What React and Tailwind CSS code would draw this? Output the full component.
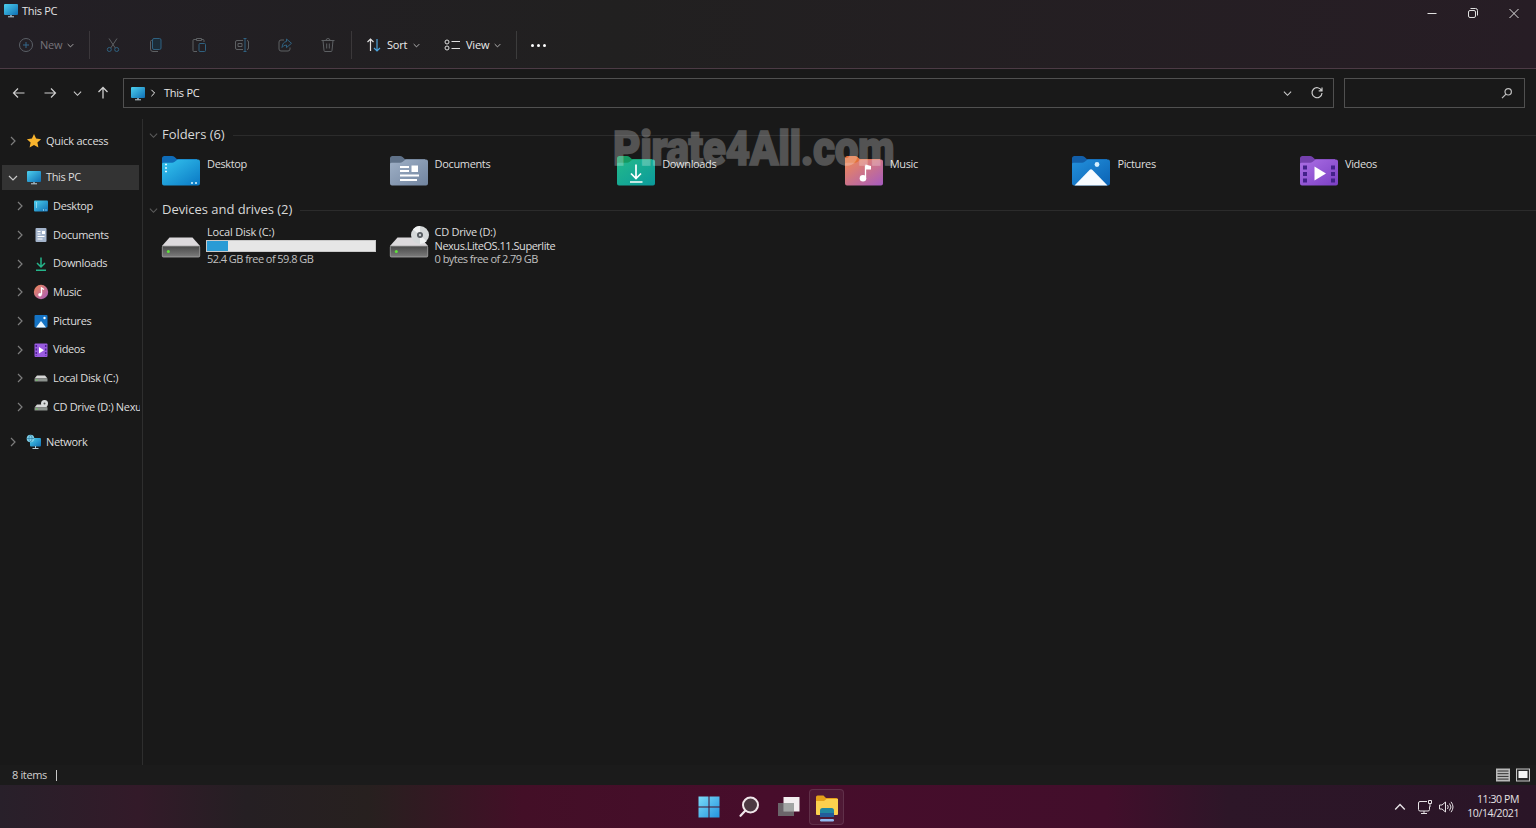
import { useState } from 'react'

const treeItems = [
  { name: 'Desktop', icon: 'desktop' },
  { name: 'Documents', icon: 'documents' },
  { name: 'Downloads', icon: 'downloads' },
  { name: 'Music', icon: 'music' },
  { name: 'Pictures', icon: 'pictures' },
  { name: 'Videos', icon: 'videos' },
  { name: 'Local Disk (C:)', icon: 'disk' },
  { name: 'CD Drive (D:) Nexus.LiteOS', icon: 'cd' },
]

const folders = [
  { name: 'Desktop', from: '#35c5ef', to: '#0a78c4', tab: '#0f6cb8' },
  { name: 'Documents', from: '#9fb0c6', to: '#71849f', tab: '#5f7188' },
  { name: 'Downloads', from: '#23b98a', to: '#0b9a9c', tab: '#149a63' },
  { name: 'Music', from: '#f08a55', to: '#a65bc0', tab: '#e2703c' },
  { name: 'Pictures', from: '#2391dc', to: '#0b62b4', tab: '#125ea8' },
  { name: 'Videos', from: '#ab6fe4', to: '#7b3fc4', tab: '#7440ad' },
]

function Chevron({ dir = 'right', className = '' }) {
  const paths = { right: 'M3 1l4 4-4 4', down: 'M1 3l4 4 4-4', up: 'M1 7l4-4 4 4' }
  return (
    <svg viewBox="0 0 10 10" className={`shrink-0 ${className}`} fill="none" stroke="currentColor" strokeWidth="1.2">
      <path d={paths[dir]} />
    </svg>
  )
}

function Monitor({ className = '' }) {
  return (
    <svg viewBox="0 0 16 15" className={`shrink-0 ${className}`}>
      <defs>
        <linearGradient id="screen" x1="0" y1="0" x2="1" y2="1">
          <stop offset="0" stopColor="#4dd0ee" />
          <stop offset="1" stopColor="#0f6fb4" />
        </linearGradient>
      </defs>
      <rect x="1" y="1" width="14" height="11" rx="1" fill="url(#screen)" />
      <path d="M7 12h2v1.5H7z" fill="#7d97a5" />
      <path d="M5 13.3h6v1H5z" fill="#c2d2da" />
    </svg>
  )
}

function TreeIcon({ type }) {
  return (
    <svg viewBox="0 0 16 16" className="h-4 w-4 shrink-0">
      {type === 'star' && (
        <path d="M8 1l2.1 4.6 5 .6-3.7 3.4 1 5L8 12.100 3.600 14.600l1-5L.9 6.200l5-.6z" fill="#f9b42d" />
      )}
      {type === 'desktop' && (
        <>
          <rect x="1" y="2.500" width="14" height="11" rx="1" fill="url(#screen)" />
          <path d="M3 5h1M3 7h1M3 9h1M10 12h1M12.500 12h1" stroke="#d8f5ff" />
        </>
      )}
      {type === 'documents' && (
        <>
          <rect x="2.500" y="1" width="11" height="14" rx="1" fill="#a4b4cb" />
          <path d="M4.500 4.500h3M4.500 7h3M4.500 9.500h7M4.500 12h5" stroke="#fff" />
          <path d="M9 4h3v3H9z" fill="#fff" />
        </>
      )}
      {type === 'downloads' && (
        <path d="M8 1.500v9M4 7l4 4 4-4M3 14.300h10" fill="none" stroke="#25b58b" strokeWidth="1.500" />
      )}
      {type === 'music' && (
        <>
          <circle cx="8" cy="8" r="7.200" fill="url(#folderMusic)" />
          <path d="M8.500 10.500V4l2.500 1.500" fill="none" stroke="#fff" strokeWidth="1.300" />
          <circle cx="7" cy="10.700" r="1.800" fill="#fff" />
        </>
      )}
      {type === 'pictures' && (
        <>
          <rect x="1.500" y="2" width="13" height="12.500" rx="1" fill="#1473c4" />
          <path d="M3 14.500l5-6.500 5 6.500z" fill="#e9f7ff" />
          <circle cx="11.500" cy="5" r="1.200" fill="#fff" />
        </>
      )}
      {type === 'videos' && (
        <>
          <rect x="1.500" y="1.500" width="13" height="13.500" rx="1" fill="#9a5be0" />
          <path d="M3.300 3v11M12.700 3v11" stroke="#4d2394" strokeWidth="1.500" strokeDasharray="2 1.500" />
          <path d="M6 5l5 3.200-5 3.200z" fill="#fff" />
        </>
      )}
      {(type === 'disk' || type === 'cd') && (
        <>
          <path d="M4 5.500h8l2.500 3h-13z" fill="#d6d6d6" />
          <rect x="1.500" y="8.500" width="13" height="3" rx=".5" fill="#8b918d" />
          <path d="M3 10h1.500" stroke="#5fe04a" />
        </>
      )}
      {type === 'cd' && (
        <>
          <circle cx="11.500" cy="4.500" r="3.500" fill="#d9dcdc" />
          <circle cx="11.500" cy="4.500" r="1" fill="#555" />
        </>
      )}
      {type === 'network' && (
        <>
          <rect x="4" y="4" width="11" height="8.500" rx="1" fill="url(#screen)" />
          <path d="M9.500 12v2M6.500 14.500h6" stroke="#b5cbd6" />
          <circle cx="4.500" cy="4.500" r="3.800" fill="#7fd0ea" />
          <path d="M1 4.500h7M4.500 1c-2 2-2 5 0 7M4.500 1c2 2 2 5 0 7" fill="none" stroke="#27759b" strokeWidth=".6" />
        </>
      )}
    </svg>
  )
}

function FolderIcon({ folder }) {
  const id = `folder${folder.name}`
  return (
    <svg viewBox="0 0 40 32" className="h-8 w-10 shrink-0">
      <defs>
        <linearGradient id={id} x1="0" y1="0" x2="1" y2="1">
          <stop offset="0" stopColor={folder.from} />
          <stop offset="1" stopColor={folder.to} />
        </linearGradient>
      </defs>
      <path d="M1 3.500Q1 1 3.500 1H11q1.500 0 2.600 1l2.200 2H36v10H1z" fill={folder.tab} />
      <path d="M1 9q0-1.300 1.500-1.300h8.700q1.200 0 2.200-.8l2.200-1.700q.8-.6 2-.6H37q2 0 2 2V28.500q0 2-2 2H3q-2 0-2-2z" fill={`url(#${id})`} />
      {folder.name === 'Desktop' && (
        <path d="M4 9.500h2M4 13h2M4 16.500h2M30 28h2M34 28h2" stroke="#d9f6ff" strokeWidth="1.600" />
      )}
      {folder.name === 'Documents' && (
        <>
          <path d="M11 12h9M11 16h9M11 20.500h19M11 25h17" stroke="#fff" strokeWidth="1.800" />
          <path d="M22.500 10.500h6.500v6.500h-6.500z" fill="#fff" />
        </>
      )}
      {folder.name === 'Downloads' && (
        <path d="M20 9.500v14M15 18.500l5 5 5-5M14 27h12.500" fill="none" stroke="#fff" strokeWidth="1.700" />
      )}
      {folder.name === 'Music' && (
        <>
          <path d="M21.500 22V10.500" stroke="#fff" strokeWidth="1.300" />
          <path d="M21.500 9.500l5.500 1.500v3.500h-5.500z" fill="#fff" />
          <circle cx="19" cy="23.300" r="3.300" fill="#fff" />
        </>
      )}
      {folder.name === 'Pictures' && (
        <>
          <path d="M3.500 30.500L18.500 15q1.500-1.500 3 0l15 15.500z" fill="#f6fbff" />
          <circle cx="26" cy="9.500" r="2.400" fill="#d5f0ff" />
        </>
      )}
      {folder.name === 'Videos' && (
        <>
          <path d="M4 10.500h4v4H4zM4 17h4v4H4zM4 23.500h4v4H4zM32 10.500h4v4h-4zM32 17h4v4h-4zM32 23.500h4v4h-4z" fill="#43218a" />
          <path d="M15.500 11.500l11.500 7-11.500 7z" fill="#fff" />
        </>
      )}
    </svg>
  )
}

function DriveIcon({ cd }) {
  return (
    <svg viewBox="0 0 40 34" className="h-[34px] w-10 shrink-0">
      <defs>
        <linearGradient id="driveFront" x1="0" y1="0" x2="0" y2="1">
          <stop offset="0" stopColor="#484848" />
          <stop offset="1" stopColor="#7c7c7c" />
        </linearGradient>
      </defs>
      <path d="M8.500 12.500h23L39 21H1z" fill="#dcd9dc" />
      <rect x="1.300" y="21" width="37.400" height="11" rx="1" fill="url(#driveFront)" stroke="#a6a6a6" strokeWidth=".8" />
      <circle cx="7.300" cy="26.500" r="1.500" fill="#5fe23c" />
      {cd && (
        <>
          <circle cx="31" cy="10" r="9" fill="#d5d9da" />
          <path d="M31 10l-7-5.600A9 9 0 0 1 31 1zM31 10l6.500 6.200A9 9 0 0 1 31 19z" fill="#f0f2f2" />
          <circle cx="31" cy="10" r="3" fill="#555b60" />
          <circle cx="31" cy="10" r="1.200" fill="#c9cdd0" />
        </>
      )}
    </svg>
  )
}

function ToolButton({ children }) {
  return (
    <button className="flex h-8 w-[43px] items-center justify-center">
      <svg viewBox="0 0 16 16" className="h-4 w-4" fill="none" stroke="#5d6063" strokeWidth="1">
        {children}
      </svg>
    </button>
  )
}

function TitleBar() {
  return (
    <div className="flex h-[26px] items-start justify-between">
      <div className="flex items-center pt-[3px] pl-[3px]">
        <Monitor className="h-[15px] w-4" />
        <span className="-mt-px ml-[3px] text-[11px] leading-[15px] tracking-[-0.3px] text-[#e4e4e4]">This PC</span>
      </div>
      <div className="flex h-[25px] items-center text-[#e0e0e0]">
        <svg viewBox="0 0 12 12" className="mr-[29px] h-3 w-3" fill="none" stroke="currentColor"><path d="M1.500 6.500h9" /></svg>
        <svg viewBox="0 0 12 12" className="mr-[29px] h-3 w-3" fill="none" stroke="currentColor">
          <rect x="1.500" y="3.500" width="7" height="7" rx="1.500" />
          <path d="M3.500 1.500h5q2 0 2 2v5" />
        </svg>
        <svg viewBox="0 0 12 12" className="mr-[16px] h-3 w-3" fill="none" stroke="currentColor"><path d="M1.500 2l9 9M10.500 2l-9 9" /></svg>
      </div>
    </div>
  )
}

function Toolbar() {
  return (
    <div className="flex h-[38px] items-center text-[11px] tracking-[-0.2px] text-[#ececec]">
      <button className="ml-[18px] flex w-[71px] items-center text-[#77747a]">
        <svg viewBox="0 0 16 16" className="h-4 w-4" fill="none" stroke="#5b6067">
          <circle cx="8" cy="8" r="6.500" />
          <path d="M8 5v6M5 8h6" stroke="#35678a" />
        </svg>
        <span className="ml-[6px]">New</span>
        <Chevron dir="down" className="ml-[5px] h-[7px] w-[7px] text-[#c0c0c0]" />
      </button>
      <div className="h-7 w-px bg-[#3b373b]" />
      <div className="ml-px flex">
        <ToolButton>
          <path d="M4 1.500l6.300 9.500M12 1.500L5.700 11" />
          <g stroke="#2f6180">
            <circle cx="4.300" cy="12.500" r="2" />
            <circle cx="11.700" cy="12.500" r="2" />
          </g>
        </ToolButton>
        <ToolButton>
          <path d="M4 3.500H3.500q-1 0-1 1V12q0 2.500 2.500 2.500h5" />
          <rect x="4.500" y="1.500" width="8.500" height="11" rx="1.500" stroke="#2f6180" fill="#1c2c38" />
        </ToolButton>
        <ToolButton>
          <path d="M6 14.500H3q-1 0-1-1v-10q0-1 1-1h2M11 2.500h1q1 0 1 1V5M5.500 1.500h5v2h-5z" />
          <rect x="8" y="6.500" width="6.500" height="8" rx="1" stroke="#2f6180" />
        </ToolButton>
        <ToolButton>
          <path d="M9 3.500H3q-1.500 0-1.500 1.500v6q0 1.500 1.500 1.500h6M13 3.500q1.500 0 1.500 1.500v6q0 1.500-1.500 1.500" />
          <path d="M4 6.500v3h4v-3z" />
          <path d="M11 1.500v13M9.500 1.500h3M9.500 14.500h3" stroke="#2f6180" />
        </ToolButton>
        <ToolButton>
          <path d="M7 3H4Q2 3 2 5v7q0 2 2 2h7q2 0 2-2v-1.500" />
          <path d="M9.500 2l5 4.300-5 4.300V8Q6.500 8 5 10.500 5.500 5 9.500 4.500z" stroke="#2f6180" />
        </ToolButton>
        <ToolButton>
          <path d="M1.500 3.500h13M6 3.500q0-2 2-2t2 2M3 3.500l1 10q0 1 1 1h6q1 0 1-1l1-10M6.700 6.500v5M9.300 6.500v5" />
        </ToolButton>
      </div>
      <div className="ml-[2px] h-7 w-px bg-[#3b383a]" />
      <button className="ml-[14px] flex w-[78px] items-center">
        <svg viewBox="0 0 16 16" className="h-4 w-4" fill="none" strokeWidth="1.200">
          <path d="M4.500 14V2M1.500 5l3-3 3 3" stroke="#e0e0e0" />
          <path d="M11 2v12M8 11l3 3 3-3" stroke="#4ba3dc" />
        </svg>
        <span className="ml-[5px]">Sort</span>
        <Chevron dir="down" className="ml-[6px] h-[7px] w-[7px] text-[#cdcdcd]" />
      </button>
      <button className="flex w-[72px] items-center">
        <svg viewBox="0 0 16 16" className="h-4 w-4" fill="none" stroke="#dedede">
          <circle cx="3" cy="5" r="2" />
          <circle cx="3" cy="11" r="2" />
          <path d="M7.500 4.500H16M7.500 11.500H16" />
        </svg>
        <span className="ml-[6px]">View</span>
        <Chevron dir="down" className="ml-[5px] h-[7px] w-[7px] text-[#cdcdcd]" />
      </button>
      <div className="h-7 w-px bg-[#3c3c3c]" />
      <div className="ml-[14px] flex gap-[3px]">
        {[0, 1, 2].map(i => <span key={i} className="h-[3px] w-[3px] rounded-full bg-white" />)}
      </div>
    </div>
  )
}

function AddressRow() {
  return (
    <div className="flex h-[50px] shrink-0 items-center bg-[#191919] pr-[11px] pb-[2px] text-[#cfcfcf]">
      <svg viewBox="0 0 14 14" className="ml-3 h-[14px] w-[14px]" fill="none" stroke="currentColor" strokeWidth="1.200">
        <path d="M12.500 7H1.500M6 2.500L1.500 7 6 11.500" />
      </svg>
      <svg viewBox="0 0 14 14" className="ml-[17px] h-[14px] w-[14px]" fill="none" stroke="currentColor" strokeWidth="1.200">
        <path d="M1.500 7h11M8 2.500L12.500 7 8 11.500" />
      </svg>
      <Chevron dir="down" className="ml-4 h-[9px] w-[9px]" />
      <svg viewBox="0 0 14 14" className="ml-[14px] h-[14px] w-[14px]" fill="none" stroke="currentColor" strokeWidth="1.300">
        <path d="M7 12.500V1.500M2.500 6L7 1.500 11.500 6" />
      </svg>
      <div className="ml-[13px] flex h-[30px] w-[1211px] items-center border border-[#505050] pl-[6px]">
        <Monitor className="h-[15px] w-4" />
        <Chevron className="ml-[3px] h-2 w-2 text-white" />
        <span className="ml-[7px] flex-1 text-[11px] tracking-[-0.25px] text-[#e8e8e8]">This PC</span>
        <Chevron dir="down" className="h-[9px] w-[9px]" />
        <svg viewBox="0 0 14 14" className="mr-[9px] ml-[18px] h-[14px] w-[14px]" fill="none" stroke="currentColor" strokeWidth="1.200">
          <path d="M11.500 4.500A5 5 0 1 0 12 7M12 1.500v3.300H8.700" />
        </svg>
      </div>
      <div className="ml-[10px] flex h-[30px] flex-1 items-center justify-end border border-[#505050] pr-[11px]">
        <svg viewBox="0 0 12 12" className="h-3 w-3" fill="none" stroke="#bdbdbd" strokeWidth="1.200">
          <circle cx="7.200" cy="4.800" r="3.200" />
          <path d="M5 7.200L1 11.200" />
        </svg>
      </div>
    </div>
  )
}

function Sidebar({ selected, onSelect }) {
  return (
    <div className="w-[143px] shrink-0 overflow-hidden border-r border-[#2e2e2e] pl-[2px] text-[11px] tracking-[-0.35px] whitespace-nowrap text-[#dedede]">
      <div className="mt-[9px] flex h-[26px] items-center pl-[6px]">
        <Chevron className="h-[10px] w-[10px] text-[#7d7d7d]" />
        <span className="ml-2"><TreeIcon type="star" /></span>
        <span className="ml-[4px] tracking-[-0.25px]">Quick access</span>
      </div>
      <div className={`mt-[11px] mr-[3px] flex h-[25px] items-center pl-[6px] ${selected === 'This PC' ? 'bg-[#333333]' : ''}`} onClick={() => onSelect('This PC')}>
        <Chevron dir="down" className="h-[10px] w-[10px] text-[#c8c8c8]" />
        <Monitor className="ml-2 h-[15px] w-4" />
        <span className="ml-[4px]">This PC</span>
      </div>
      <div className="mt-[2px] mr-[2px] overflow-hidden">
        {treeItems.map(item => (
          <div key={item.name} className={`flex h-[28.650px] items-center pl-[13px] ${selected === item.name ? 'bg-[#333333]' : ''}`} onClick={() => onSelect(item.name)}>
            <Chevron className="h-[10px] w-[10px] text-[#7d7d7d]" />
            <span className="ml-2"><TreeIcon type={item.icon} /></span>
            <span className="ml-[4px]">{item.name}</span>
          </div>
        ))}
      </div>
      <div className="mt-[8px] flex h-[26px] items-center pl-[6px]">
        <Chevron className="h-[10px] w-[10px] text-[#7d7d7d]" />
        <span className="ml-2"><TreeIcon type="network" /></span>
        <span className="ml-[4px]">Network</span>
      </div>
    </div>
  )
}

function GroupHeader({ children }) {
  return (
    <div className="flex h-5 items-center pl-[6px]">
      <Chevron dir="down" className="h-[9px] w-[9px] text-[#5c5c5c]" />
      <span className="ml-[4px] text-[13px] tracking-[-0.04px] text-[#d8d8d8]">{children}</span>
      <div className="ml-2 h-px flex-1 bg-[#2b2b2b]" />
    </div>
  )
}

function Content() {
  return (
    <div className="relative min-w-0 flex-1 pt-[6px] text-[11px] tracking-[-0.35px] text-[#dedede]">
      <GroupHeader>Folders (6)</GroupHeader>
      <div className="mt-[10px] flex pl-[18px]">
        {folders.map(folder => (
          <div key={folder.name} className="flex w-[227.600px] shrink-0">
            <FolderIcon folder={folder} />
            <span className="ml-[6px] leading-[17px]">{folder.name}</span>
          </div>
        ))}
      </div>
      <div className="mt-[13px]"><GroupHeader>Devices and drives (2)</GroupHeader></div>
      <div className="mt-[5px] flex pl-[18px]">
        <div className="flex w-[227.600px]">
          <DriveIcon />
          <div className="ml-[5px] w-[170px]">
            <div className="pl-px leading-[14px] tracking-[-0.2px]">Local Disk (C:)</div>
            <div className="mt-px h-3 border border-[#c9c9c9] bg-[#e6e6e6]">
              <div className="h-full bg-[#2a9bd5]" style={{ width: `${((59.8 - 52.4) / 59.8) * 100}%` }} />
            </div>
            <div className="pl-px leading-[14px] tracking-[-0.55px] text-[#c0c0c0]">52.4 GB free of 59.8 GB</div>
          </div>
        </div>
        <div className="flex">
          <DriveIcon cd />
          <div className="ml-[6px] leading-[13.700px]">
            <div className="tracking-[-0.3px]">CD Drive (D:)</div>
            <div className="tracking-[-0.48px]">Nexus.LiteOS.11.Superlite</div>
            <div className="tracking-[-0.55px] text-[#c0c0c0]">0 bytes free of 2.79 GB</div>
          </div>
        </div>
      </div>
      <div className="pointer-events-none absolute top-[6px] left-[470px] origin-left scale-x-[0.885] font-['Roboto'] text-[48px] leading-[48px] font-black tracking-[-0.500px] text-white opacity-25 [-webkit-text-stroke:1.5px_white]">
        Pirate4All.com
      </div>
    </div>
  )
}

function StatusBar() {
  return (
    <div className="flex h-5 shrink-0 items-center bg-[#1b1b1b] pr-[5px] pl-3 text-[11px] tracking-[-0.35px] text-[#d0d0d0]">
      <span>8 items</span>
      <span className="ml-[9px] h-[11px] w-px bg-[#c8c8c8]" />
      <svg viewBox="0 0 16 14" className="ml-auto h-[14px] w-4">
        <rect x="1" y="0.500" width="14" height="13" fill="#b9b9b9" />
        <path d="M2.500 3h11M2.500 5.700h11M2.500 8.400h11M2.500 11.100h11" stroke="#2e2e2e" />
      </svg>
      <svg viewBox="0 0 16 14" className="ml-1 h-[14px] w-4">
        <rect x="1.500" y="1" width="13" height="12" fill="#2a2a2a" stroke="#c5c5c5" />
        <rect x="3.500" y="3" width="9" height="7" fill="#f4f4f4" />
      </svg>
    </div>
  )
}

function Taskbar() {
  return (
    <div className="flex h-[43px] shrink-0 items-center bg-[linear-gradient(to_right,#28202a,#331a29_9%,#251f23_16%,#27201f_24%,#430f27_34%,#470d2b_50%,#420e2b_72%,#2d1628_80%,#2a1527)]">
      <div className="w-[697px]" />
      <div className="flex items-center">
        <svg viewBox="0 0 24 24" className="h-6 w-6">
          <defs>
            <linearGradient id="start" x1="0" y1="0" x2="1" y2="1">
              <stop offset="0" stopColor="#7bdcf8" />
              <stop offset="1" stopColor="#2393df" />
            </linearGradient>
          </defs>
          <path d="M1.500 1.500h10v10h-10zM12.500 1.500h10v10h-10zM1.500 12.500h10v10h-10zM12.500 12.500h10v10h-10z" fill="url(#start)" />
        </svg>
        <svg viewBox="0 0 24 24" className="ml-4 h-6 w-6" fill="none" stroke="#f0e6ea">
          <circle cx="13.500" cy="10" r="7.500" strokeWidth="2" fill="#4c3942" />
          <path d="M8.200 15.800L3.500 20.800" strokeWidth="2.200" strokeLinecap="round" />
        </svg>
        <svg viewBox="0 0 24 24" className="ml-4 h-6 w-6">
          <rect x="6.500" y="2" width="16" height="14.500" fill="#f3eef0" />
          <rect x="1" y="8" width="16" height="13" fill="#6f6d70" fillOpacity="0.920" />
          <path d="M6.500 8H17v8.500H6.500z" fill="#a2a5a4" />
        </svg>
        <div className="ml-2 flex h-9 w-[35px] items-center justify-center rounded border border-white/10 bg-white/5">
          <svg viewBox="0 0 26 30" className="h-[30px] w-[26px]">
            <path d="M2 5q0-1.500 1.500-1.500h6L12 6h10.500Q24 6 24 7.500V22H2z" fill="#e5a019" />
            <path d="M2 9h8l2.500-2H24v15q0 1-1 1H3q-1 0-1-1z" fill="#fcd04e" />
            <path d="M6 23v-4.500Q6 16 8.500 16h9Q20 16 20 18.500V23z" fill="#2187a0" />
            <rect x="6" y="21" width="14" height="4" fill="#235c9a" />
            <rect x="6" y="27" width="14" height="2.500" rx="1.200" fill="#91baf0" />
          </svg>
        </div>
      </div>
      <div className="flex flex-1 items-center justify-end pr-[17px] text-[#e6e2e5]">
        <Chevron dir="up" className="h-[12px] w-[12px]" />
        <svg viewBox="0 0 16 16" className="ml-[11px] h-4 w-4" fill="none" stroke="currentColor">
          <path d="M10 2.500H3q-1.500 0-1.500 1.500v6.500Q1.500 12 3 12h8q1.500 0 1.500-1.500V8M7 12v2.500M4 14.500h6" />
          <path d="M11.500 1.500h3v3h-3zM13 4.500V8h-1" />
        </svg>
        <svg viewBox="0 0 16 16" className="ml-[5px] h-4 w-4" fill="none" stroke="currentColor">
          <path d="M1.500 6v4H4l3.500 3V3L4 6zM9.500 6q1.500 2 0 4M11.500 4.500q3 3.500 0 7M13 2.800q4 5.200 0 10.400" />
        </svg>
        <div className="ml-[13px] text-right text-[10.500px] leading-[14px] tracking-[-0.400px]">
          <div className="-mt-px">11:30 PM</div>
          <div>10/14/2021</div>
        </div>
      </div>
    </div>
  )
}

export default function App() {
  const [selected, setSelected] = useState('This PC')

  return (
    <div className="flex h-[828px] w-[1536px] flex-col overflow-hidden bg-[#191919] font-['Open_Sans','Noto_Sans',sans-serif]">
      <div className="h-[69px] shrink-0 border-b border-[#4c3b45] bg-linear-to-r from-[#231f25] via-[#212020] via-40% to-[#271d25]">
        <TitleBar />
        <Toolbar />
      </div>
      <AddressRow />
      <div className="flex min-h-0 flex-1">
        <Sidebar selected={selected} onSelect={setSelected} />
        <Content />
      </div>
      <StatusBar />
      <Taskbar />
    </div>
  )
}
